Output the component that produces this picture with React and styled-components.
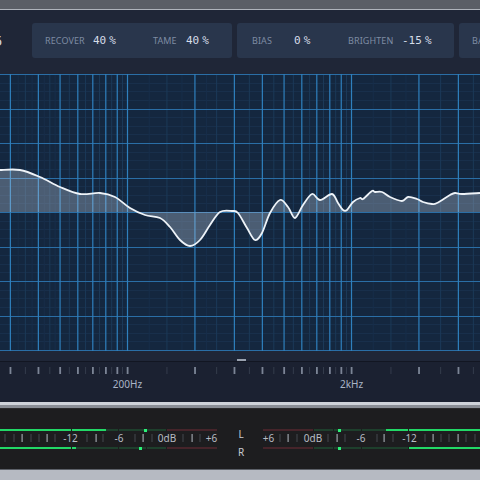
import React from "react";
import styled, { createGlobalStyle } from "styled-components";

const Global = createGlobalStyle`
  html, body { margin: 0; padding: 0; background: #1d1d1f; }
  body { width: 480px; height: 480px; overflow: hidden; font-family: "Noto Sans", "DejaVu Sans", sans-serif; }
  * { box-sizing: border-box; }
`;

const fx = (f) => 127.5 + 224 * Math.log10(f / 200);
const BRIGHT = [60, 80, 100, 120, 140, 160, 180, 200, 400, 600, 800, 1000, 1200, 1400, 1600, 1800, 2000, 4000, 6000];
const DIM = [70, 90, 110, 130, 150, 170, 190, 300, 500, 700, 900, 1100, 1300, 1500, 1700, 1900, 3000, 5000, 7000];
const FAINT = [65, 75, 85, 95, 250, 350, 450, 2500, 3500];

const CURVE = [
  [0, 170], [20, 170], [40, 177], [60, 187], [80, 194], [100, 193], [115, 197], [130, 208], [145, 215],
  [160, 218], [170, 227], [180, 240], [190, 246], [200, 240], [210, 225], [220, 212], [232, 211],
  [238, 213], [247, 228], [255, 240], [262, 233], [270, 213], [280, 200], [288, 207], [295, 218],
  [303, 205], [312, 194], [320, 200], [332, 194], [338, 203], [343, 210], [347, 210], [353, 202],
  [360, 198], [363, 199], [372, 191], [375, 192], [382, 192], [390, 197], [402, 201], [408, 197],
  [417, 199], [423, 202], [432, 204], [437, 203], [450, 195], [455, 193], [462, 194], [480, 193],
];

function smooth(pts) {
  let d = `M${pts[0][0]},${pts[0][1]}`;
  for (let i = 0; i < pts.length - 1; i++) {
    const p0 = pts[i - 1] || pts[i];
    const p1 = pts[i];
    const p2 = pts[i + 1];
    const p3 = pts[i + 2] || p2;
    const c1x = p1[0] + (p2[0] - p0[0]) / 6;
    const c1y = p1[1] + (p2[1] - p0[1]) / 6;
    const c2x = p2[0] - (p3[0] - p1[0]) / 6;
    const c2y = p2[1] - (p3[1] - p1[1]) / 6;
    d += ` C${c1x.toFixed(2)},${c1y.toFixed(2)} ${c2x.toFixed(2)},${c2y.toFixed(2)} ${p2[0]},${p2[1]}`;
  }
  return d;
}

const Page = styled.div`
  width: 480px;
  height: 480px;
  display: flex;
  flex-direction: column;
  overflow: hidden;
`;

const Bezel = styled.div`
  height: 10px;
  background: #5a5e66;
  border-bottom: 1px solid #aeb3bb;
  flex: none;
`;

const Header = styled.div`
  height: 64px;
  flex: none;
  background: #1f2637;
  display: flex;
  align-items: flex-start;
  gap: 5px;
  padding-top: 13px;
  overflow: hidden;
`;

const Lead = styled.div`
  width: 27px;
  flex: none;
  height: 35px;
  display: flex;
  align-items: center;
  overflow: hidden;
`;

const LeadValue = styled.span`
  margin-left: -6px;
  font-family: "DejaVu Sans Mono", monospace;
  font-size: 14px;
  color: #ccd4e0;
`;

const Panel = styled.div`
  width: ${(p) => p.$w}px;
  flex: none;
  height: 35px;
  border-radius: 3px;
  background: #29364c;
  display: flex;
  align-items: center;
  padding-left: ${(p) => p.$pad}px;
`;

const Param = styled.div`
  width: ${(p) => (p.$w ? `${p.$w}px` : "auto")};
  flex: none;
  display: flex;
  align-items: center;
`;

const Label = styled.span`
  width: ${(p) => p.$w}px;
  flex: none;
  font-family: "Noto Sans", sans-serif;
  font-size: 9px;
  letter-spacing: 0.1px;
  color: #7e8ca3;
`;

const Value = styled.span`
  font-family: "DejaVu Sans Mono", monospace;
  font-size: 11px;
  color: #d6dde8;
  white-space: pre;
`;

const Unit = styled.span`
  margin-left: 3px;
`;

const GridSvg = styled.svg`
  display: block;
  flex: none;
  width: 480px;
  height: 277px;
  background: #14273f;
`;

const Band = styled.div`
  height: 11px;
  flex: none;
  background: #1f2637;
  display: flex;
  justify-content: center;
  align-items: flex-end;
  padding-left: 3px;
  border-bottom: 1px solid #121622;
`;

const Handle = styled.div`
  width: 9px;
  height: 2px;
  background: #9aa2b0;
`;

const RulerSvg = styled.svg`
  display: block;
  flex: none;
  width: 480px;
  height: 40px;
  background: #1b2131;
`;

const Separator = styled.div`
  height: 7px;
  flex: none;
  border-top: 3px solid #cfd3da;
  background: #8a8e96;
  border-bottom: 1px solid #2a2a2c;
`;

const MeterSection = styled.div`
  height: 60px;
  flex: none;
  background: #1d1d1f;
  display: flex;
`;

const MeterCol = styled.div`
  width: 217px;
  flex: none;
  display: flex;
  flex-direction: column;
  padding-top: 20px;
`;

const Bar = styled.div`
  position: relative;
  height: 2px;
  display: flex;
  flex-direction: ${(p) => (p.$rev ? "row-reverse" : "row")};
  gap: 1px;
  margin-top: ${(p) => p.$mt || 0}px;
`;

const Segment = styled.div`
  position: relative;
  flex: none;
  height: 2px;
  background: ${(p) => (p.$red ? "#46242a" : "#1e3f2c")};
  display: flex;
  justify-content: ${(p) => (p.$rev ? "flex-end" : "flex-start")};
`;

const Lit = styled.div`
  height: 2px;
  background: #22d866;
`;

const Peak = styled.div`
  position: absolute;
  top: -0.5px;
  height: 3px;
  width: 3px;
  background: #2cf078;
`;

const ScaleSvg = styled.svg`
  display: block;
  width: 217px;
  height: 13px;
  margin-top: 1px;
  overflow: visible;
`;

const Center = styled.div`
  width: 46px;
  flex: none;
  display: flex;
  flex-direction: column;
  align-items: center;
  padding-top: 16px;
  padding-left: 2px;
`;

const Channel = styled.span`
  font-family: "Noto Sans", sans-serif;
  font-size: 10px;
  line-height: 18px;
  color: #c6cad2;
`;

const BottomBar = styled.div`
  flex: 1;
  background: #b6bac2;
  border-top: 1px solid #5c6068;
`;

const SEGS = [
  { s: 0, w: 71 },
  { s: 72, w: 46 },
  { s: 119, w: 27 },
  { s: 147, w: 19 },
  { s: 167, w: 50, red: true },
];

function MeterBar({ level, peak, rev, mt }) {
  return (
    <Bar $rev={rev} $mt={mt}>
      {SEGS.map((seg, i) => {
        const lit = Math.max(0, Math.min(seg.w, level - seg.s));
        return (
          <Segment key={i} $red={seg.red} $rev={rev} style={{ width: seg.w }}>
            {lit > 0 && <Lit style={{ width: lit }} />}
          </Segment>
        );
      })}
      <Peak style={rev ? { right: peak } : { left: peak }} />
    </Bar>
  );
}

const TICK_BRIGHT = [22, 47, 96, 143, 192];
const TICK_DIM = [5, 14, 31, 39, 55, 87, 103, 135, 152, 183, 200];
const TICK_LABELS = [
  { x: 70.5, t: "-12" },
  { x: 119, t: "-6" },
  { x: 167, t: "0dB" },
  { x: 211.5, t: "+6" },
];

function Scale({ rev }) {
  const m = (x) => (rev ? 217 - x : x);
  return (
    <ScaleSvg viewBox="0 0 217 13">
      {TICK_DIM.map((x) => (
        <rect key={`d${x}`} x={m(x) - 0.5} y={2} width={1} height={8} fill="#45494f" />
      ))}
      {TICK_BRIGHT.map((x) => (
        <rect key={`b${x}`} x={m(x) - 0.5} y={2} width={1.2} height={8} fill="#9ca1a8" />
      ))}
      {TICK_LABELS.map((l) => (
        <text
          key={l.t}
          x={m(l.x)}
          y={10}
          textAnchor="middle"
          fontFamily="Noto Sans, sans-serif"
          fontSize="10"
          fill="#b8bcc4"
        >
          {l.t}
        </text>
      ))}
    </ScaleSvg>
  );
}

function Grid() {
  const curve = smooth(CURVE);
  const fill = `${curve} L480,212 L0,212 Z`;
  const hBright = Array.from({ length: 9 }, (_, k) => Math.round(74 + k * 34.5) + 0.5);
  const hDim = [];
  for (let k = 0; k < 8; k++) {
    for (let j = 1; j < 4; j++) hDim.push(Math.round(74 + k * 34.5 + (j * 34.5) / 4) + 0.5);
  }
  return (
    <GridSvg viewBox="0 74 480 277">
      {hDim.map((y) => (
        <line key={`hd${y}`} x1={0} x2={480} y1={y} y2={y} stroke="#182f4b" strokeWidth="1" />
      ))}
      {FAINT.map((f) => (
        <line key={`vf${f}`} x1={fx(f)} x2={fx(f)} y1={74} y2={351} stroke="#172e4a" strokeWidth="1" />
      ))}
      {DIM.map((f) => (
        <line key={`vd${f}`} x1={fx(f)} x2={fx(f)} y1={74} y2={351} stroke="#1b3958" strokeWidth="1" />
      ))}
      {hBright.map((y) => (
        <line key={`hb${y}`} x1={0} x2={480} y1={y} y2={y} stroke="#2a6ea6" strokeWidth="1" />
      ))}
      {BRIGHT.map((f) => (
        <line key={`vb${f}`} x1={fx(f)} x2={fx(f)} y1={74} y2={351} stroke="#2f80be" strokeWidth="1.2" />
      ))}
      <path d={fill} fill="rgba(205,218,236,0.3)" />
      <path d={curve} fill="none" stroke="#eef3f8" strokeWidth="1.8" strokeLinejoin="round" />
    </GridSvg>
  );
}

function Ruler() {
  return (
    <RulerSvg viewBox="0 0 480 40">
      {DIM.map((f) => (
        <rect key={`d${f}`} x={fx(f) - 0.5} y={5} width={1} height={7} fill="#343c4c" />
      ))}
      {BRIGHT.map((f) => (
        <rect key={`b${f}`} x={fx(f) - 0.8} y={5} width={1.8} height={7} fill="#7c8596" />
      ))}
      <text x={fx(200)} y={26} textAnchor="middle" fontFamily="Noto Sans, sans-serif" fontSize="10" fill="#a9b4c6">
        200Hz
      </text>
      <text x={fx(2000)} y={26} textAnchor="middle" fontFamily="Noto Sans, sans-serif" fontSize="10" fill="#a9b4c6">
        2kHz
      </text>
    </RulerSvg>
  );
}

function Val({ n }) {
  return (
    <Value>
      {n}
      <Unit>%</Unit>
    </Value>
  );
}

export default function App() {
  return (
    <Page>
      <Global />
      <Bezel />
      <Header>
        <Lead>
          <LeadValue>5</LeadValue>
        </Lead>
        <Panel $w={200} $pad={13}>
          <Param $w={108}>
            <Label $w={48}>RECOVER</Label>
            <Val n="40" />
          </Param>
          <Param>
            <Label $w={33}>TAME</Label>
            <Val n="40" />
          </Param>
        </Panel>
        <Panel $w={217} $pad={15}>
          <Param $w={96}>
            <Label $w={42}>BIAS</Label>
            <Val n="0" />
          </Param>
          <Param>
            <Label $w={54}>BRIGHTEN</Label>
            <Val n="-15" />
          </Param>
        </Panel>
        <Panel $w={120} $pad={13}>
          <Param>
            <Label $w={40}>BASS</Label>
            <Val n="0" />
          </Param>
        </Panel>
      </Header>
      <Grid />
      <Band>
        <Handle />
      </Band>
      <Ruler />
      <Separator />
      <MeterSection>
        <MeterCol>
          <MeterBar level={106} peak={144} />
          <Scale />
          <MeterBar level={76} peak={139} mt={2} />
        </MeterCol>
        <Center>
          <Channel>L</Channel>
          <Channel>R</Channel>
        </Center>
        <MeterCol>
          <MeterBar level={94} peak={139} rev />
          <Scale rev />
          <MeterBar level={71} peak={139} rev mt={2} />
        </MeterCol>
      </MeterSection>
      <BottomBar />
    </Page>
  );
}
